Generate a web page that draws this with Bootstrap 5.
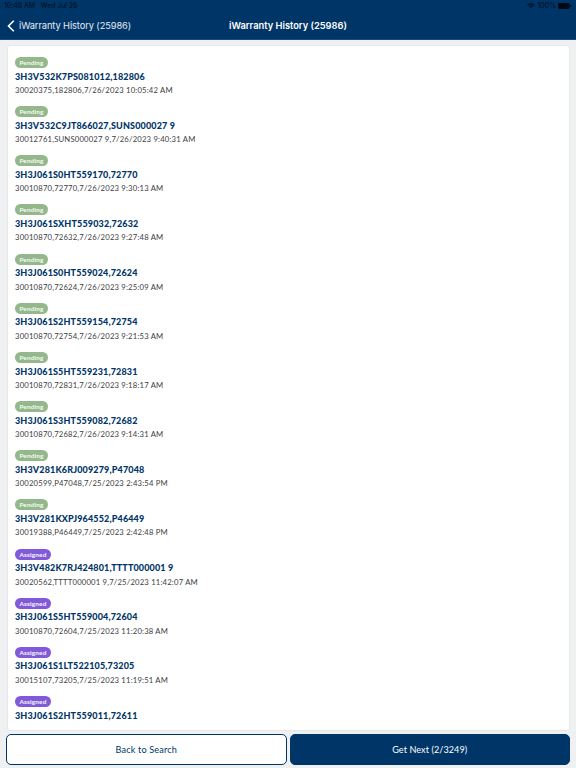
<!DOCTYPE html>
<html lang="en">
<head>
<meta charset="utf-8">
<meta name="viewport" content="width=device-width, initial-scale=1">
<title>iWarranty History</title>
<link href="https://cdn.jsdelivr.net/npm/bootstrap@5.3.0/dist/css/bootstrap.min.css" rel="stylesheet">
<style>
  :root { --navy: #003568; }
  body { background: #eef0f1; font-family: Lato, "Noto Sans", sans-serif; }
  .app-head { background: var(--navy); height: 40px; flex: none; font-family: Inter, sans-serif; border-bottom: 1px solid #174a7b; }
  .status { height: 12px; font-size: 6.9px; line-height: 12px; color: #001429; font-weight: 500; padding: 0 5px 0 4px; letter-spacing: -.02px; }
  .status .day { margin-left: 5.5px; }
  .status .indicators { gap: 2px; }
  .title-row { height: 27px; font-size: 9.3px; line-height: 27px; padding: 0 7px; }
  .title-row > * { flex: 1 1 0; }
  .back { color: #e3edf7; gap: 4px; letter-spacing: -.1px; white-space: nowrap; }
  .heading { color: #fff; font-weight: 600; white-space: nowrap; letter-spacing: 0; }
  .sheet { margin: 5px 6px 0 7px; height: 686px; flex: none; border-radius: 3px; border: 1px solid #e5e7e8; padding: 11px 7px 0; }
  .claim { height: 49.17px; }
  .tag { height: 11px; line-height: 11px; font-size: 6.4px; font-weight: 700; width: 33px; border-radius: 6px; background: #94b88b; color: #f7fbf5; letter-spacing: .16px; }
  .tag.assigned { width: 36px; background: #8259db; }
  .claim-id { font-size: 9px; line-height: 14px; margin-top: 1.6px; font-weight: 900; color: var(--navy); white-space: pre; letter-spacing: .15px; }
  .claim-info { font-size: 7.7px; line-height: 12px; margin-top: .4px; color: #404040; white-space: pre; letter-spacing: .19px; }
  .actions { padding: 3px 6px 0; gap: 3px; }
  .actions .btn { height: 31px; flex: 1 1 0; padding: 0; border: 1.5px solid var(--navy); border-radius: 5px; font-size: 9.1px; line-height: 28px; letter-spacing: .16px; color: var(--navy); background: #fff; }
  .actions .btn.next { background: var(--navy); color: #fff; letter-spacing: .07px; }
</style>
</head>
<body class="vh-100 d-flex flex-column overflow-hidden">
<header class="app-head">
  <div class="status d-flex justify-content-between">
    <div><span>10:48 AM</span><span class="day">Wed Jul 26</span></div>
    <div class="indicators d-flex align-items-center">
      <svg width="8" height="6" viewBox="0 0 16 12" fill="none" stroke="currentColor" stroke-width="2.6"><path d="M1 4.5Q8-1.5 15 4.5M4 7.5Q8 4 12 7.5"/><path d="M6 9l2-1 2 1-2 2.5z" fill="currentColor" stroke="none"/></svg>
      <span>100%</span>
      <svg width="13" height="6" viewBox="0 0 13 6" fill="#000914"><rect width="11.5" height="6" rx="1.4"/><rect x="12" y="2" width="1" height="2" rx=".5"/></svg>
    </div>
  </div>
  <div class="title-row d-flex">
    <div class="back d-flex align-items-center"><svg width="8" height="12" viewBox="0 0 8 12" fill="none" stroke="#fff" stroke-width="1.6"><path d="M6.8.8 1.5 6l5.3 5.2"/></svg><span>iWarranty History (25986)</span></div>
    <div class="heading text-center">iWarranty History (25986)</div>
    <div></div>
  </div>
</header>
<main class="sheet bg-white overflow-hidden" id="claims"></main>
<footer class="actions d-flex">
  <button class="btn" type="button">Back to Search</button>
  <button class="btn next" type="button">Get Next (2/3249)</button>
</footer>
<script src="https://cdn.jsdelivr.net/npm/bootstrap@5.3.0/dist/js/bootstrap.bundle.min.js"></script>
<script>
  const claims = [
    ["Pending", "3H3V532K7PS081012,182806", "30020375,182806,7/26/2023 10:05:42 AM"],
    ["Pending", "3H3V532C9JT866027,SUNS000027 9", "30012761,SUNS000027 9,7/26/2023 9:40:31 AM"],
    ["Pending", "3H3J061S0HT559170,72770", "30010870,72770,7/26/2023 9:30:13 AM"],
    ["Pending", "3H3J061SXHT559032,72632", "30010870,72632,7/26/2023 9:27:48 AM"],
    ["Pending", "3H3J061S0HT559024,72624", "30010870,72624,7/26/2023 9:25:09 AM"],
    ["Pending", "3H3J061S2HT559154,72754", "30010870,72754,7/26/2023 9:21:53 AM"],
    ["Pending", "3H3J061S5HT559231,72831", "30010870,72831,7/26/2023 9:18:17 AM"],
    ["Pending", "3H3J061S3HT559082,72682", "30010870,72682,7/26/2023 9:14:31 AM"],
    ["Pending", "3H3V281K6RJ009279,P47048", "30020599,P47048,7/25/2023 2:43:54 PM"],
    ["Pending", "3H3V281KXPJ964552,P46449", "30019388,P46449,7/25/2023 2:42:48 PM"],
    ["Assigned", "3H3V482K7RJ424801,TTTT000001 9", "30020562,TTTT000001 9,7/25/2023 11:42:07 AM"],
    ["Assigned", "3H3J061S5HT559004,72604", "30010870,72604,7/25/2023 11:20:38 AM"],
    ["Assigned", "3H3J061S1LT522105,73205", "30015107,73205,7/25/2023 11:19:51 AM"],
    ["Assigned", "3H3J061S2HT559011,72611", ""]
  ];
  document.getElementById("claims").innerHTML = claims.map(([state, id, info]) => `
    <article class="claim">
      <div class="tag ${state.toLowerCase()} text-center">${state}</div>
      <div class="claim-id">${id}</div>
      <div class="claim-info">${info}</div>
    </article>`).join("");
</script>
</body>
</html>
